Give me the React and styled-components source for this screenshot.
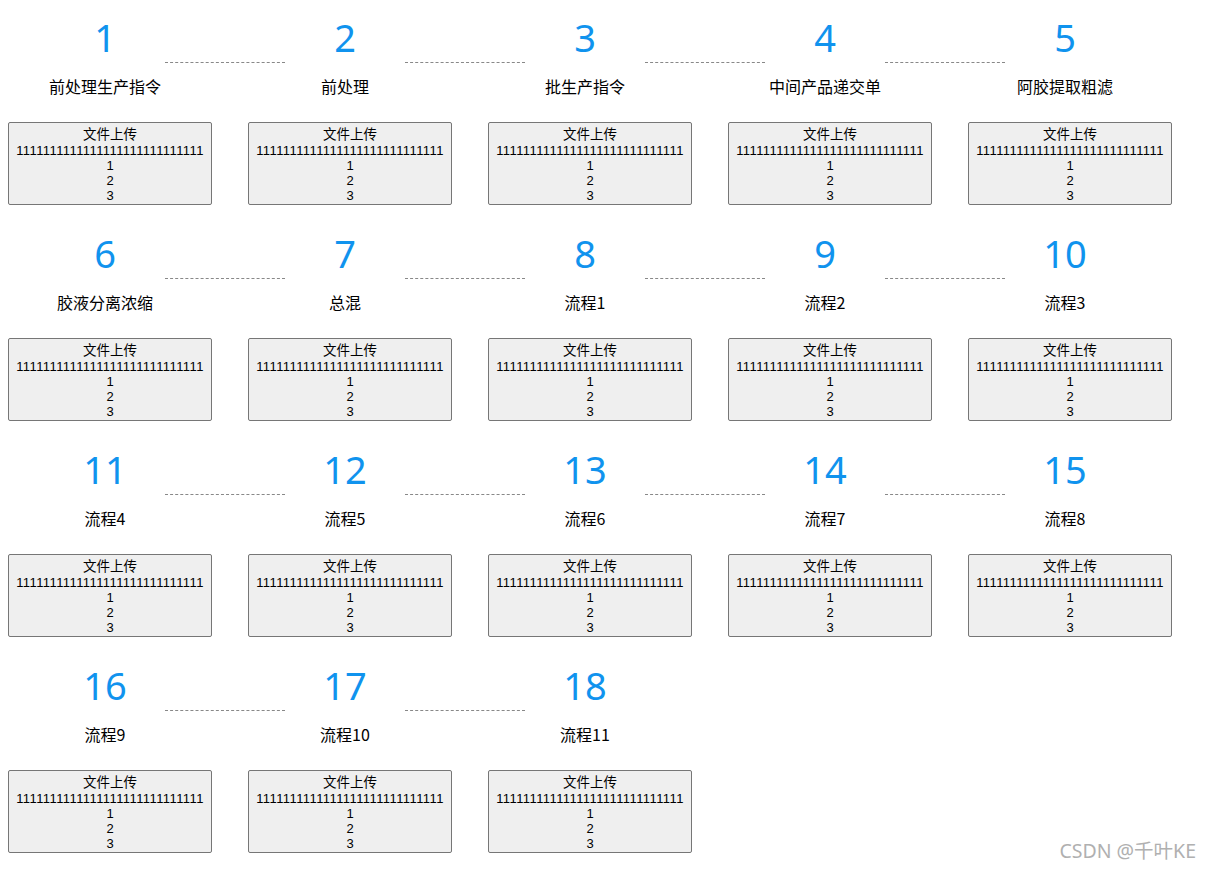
import React from 'react';
import styled, { createGlobalStyle } from 'styled-components';

const steps = [
  '前处理生产指令', '前处理', '批生产指令', '中间产品递交单', '阿胶提取粗滤',
  '胶液分离浓缩', '总混', '流程1', '流程2', '流程3',
  '流程4', '流程5', '流程6', '流程7', '流程8',
  '流程9', '流程10', '流程11',
];

const PER_ROW = 5;

const GlobalStyle = createGlobalStyle`
  body {
    margin: 8px;
    background: #ffffff;
    font-family: "Noto Sans", "Noto Sans CJK SC", sans-serif;
    color: #000;
  }
`;

const Page = styled.div`
  position: relative;
  width: 1194px;
  min-height: 854px;
`;

const Grid = styled.div`
  display: grid;
  grid-template-columns: repeat(5, 240px);
  row-gap: 19px;
`;

const Item = styled.div`
  display: flex;
  flex-direction: column;
  width: 240px;
`;

const Head = styled.div`
  display: flex;
  align-items: flex-end;
  height: 58px;
  padding-left: 37px;
`;

const Num = styled.div`
  width: 120px;
  height: 58px;
  line-height: 58px;
  text-align: center;
  font-family: "Noto Sans", "Open Sans", sans-serif;
  font-size: 38px;
  color: #1093ee;
`;

const Line = styled.div`
  width: 120px;
  margin-right: -37px;
  margin-bottom: 3px;
  border-top: 1px dashed #888;
  visibility: ${p => (p.$hidden ? 'hidden' : 'visible')};
`;

const Title = styled.div`
  width: 194px;
  margin-top: 10px;
  height: 20px;
  line-height: 20px;
  text-align: center;
  font-family: "Noto Sans CJK SC", sans-serif;
  font-size: 16px;
  color: #000;
`;

const Upload = styled.div`
  box-sizing: border-box;
  width: 204px;
  height: 83px;
  margin-top: 26px;
  padding: 2px 0 0;
  background: #efefef;
  border: 1px solid #767676;
  border-radius: 2px;
  text-align: center;
  color: #000;
`;

const Label = styled.div`
  height: 17px;
  line-height: 16px;
  font-family: "Noto Sans CJK SC", sans-serif;
  font-size: 13.5px;
`;

const Digits = styled.div`
  height: 15px;
  line-height: 17px;
  font-family: "Liberation Sans", sans-serif;
  font-size: 13px;
  letter-spacing: ${p => (p.$wide ? '0.4px' : '0')};
`;

const Watermark = styled.div`
  position: absolute;
  right: 6px;
  bottom: -2px;
  font-family: "Noto Sans", "Noto Sans CJK SC", sans-serif;
  font-size: 19.5px;
  color: #b0b0b0;
`;

export default function App() {
  return (
    <>
      <GlobalStyle />
      <Page>
        <Grid>
          {steps.map((title, i) => {
            const last = i === steps.length - 1 || (i + 1) % PER_ROW === 0;
            return (
              <Item key={i}>
                <Head>
                  <Num>{i + 1}</Num>
                  <Line $hidden={last} />
                </Head>
                <Title>{title}</Title>
                <Upload>
                  <Label>文件上传</Label>
                  <Digits $wide>1111111111111111111111111111</Digits>
                  <Digits>1</Digits>
                  <Digits>2</Digits>
                  <Digits>3</Digits>
                </Upload>
              </Item>
            );
          })}
        </Grid>
        <Watermark>CSDN @千叶KE</Watermark>
      </Page>
    </>
  );
}
